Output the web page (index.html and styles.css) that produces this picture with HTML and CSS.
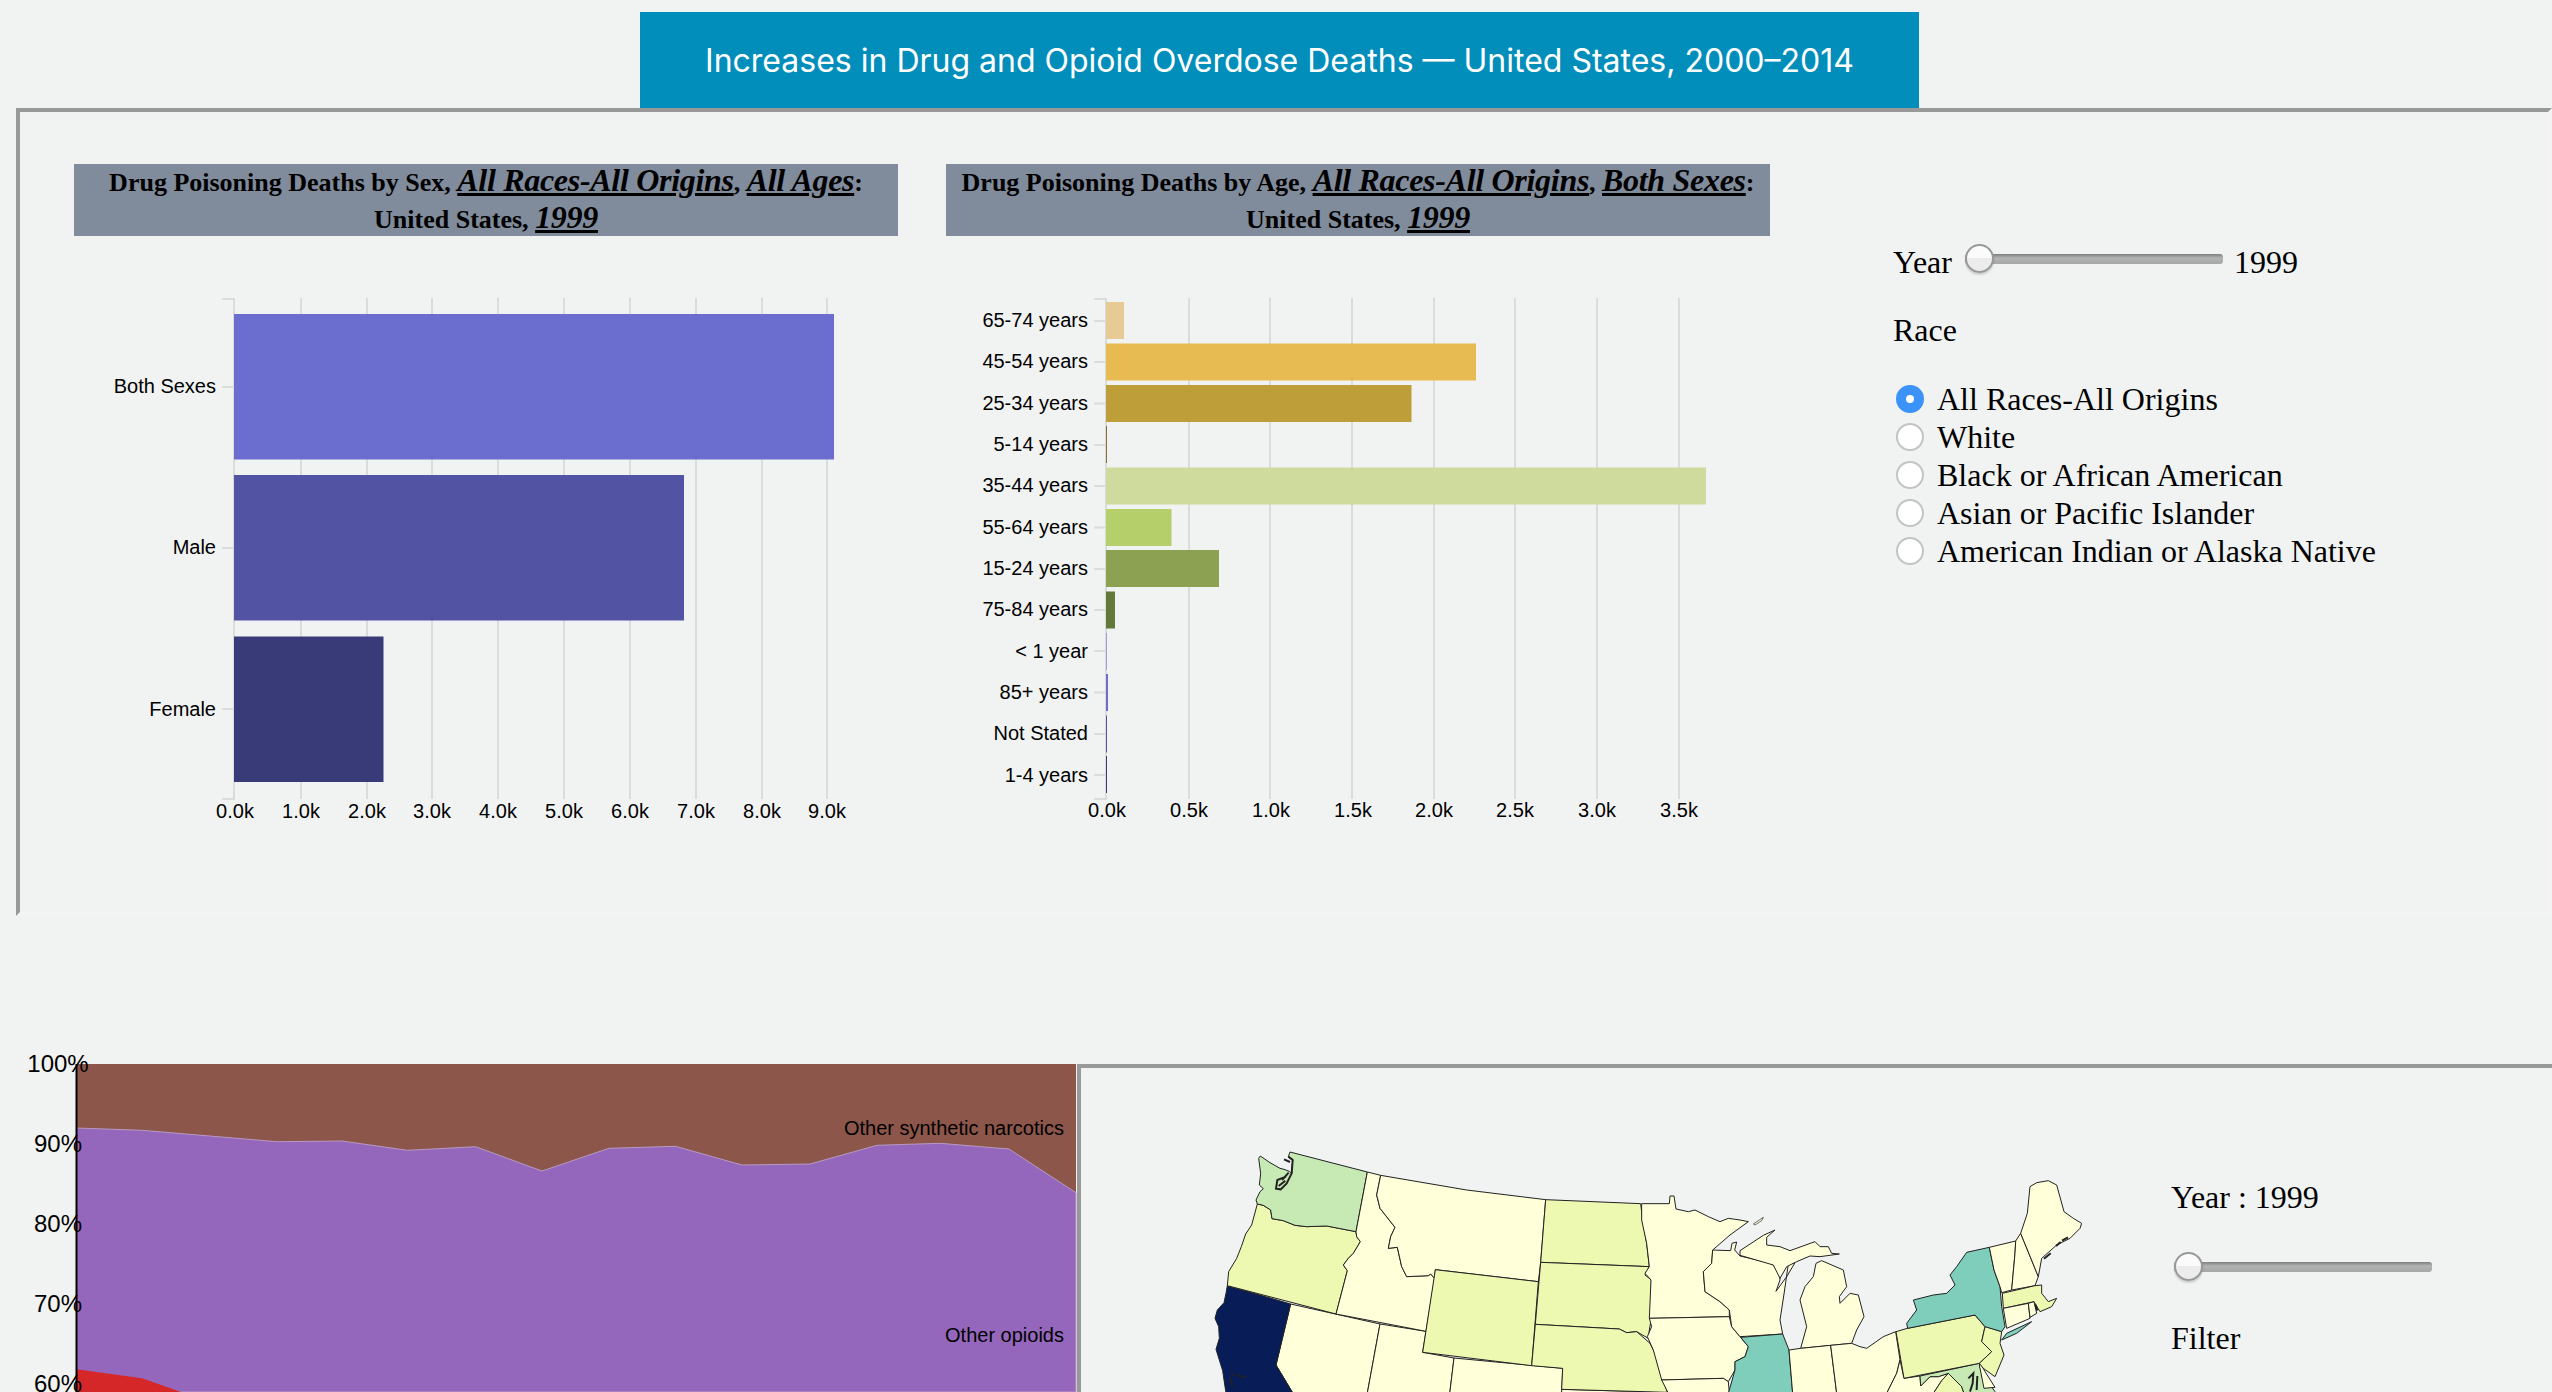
FILE: index.html
```html
<!DOCTYPE html>
<html lang="en">
<head>
    <meta charset="UTF-8">
    <title>Increases in Drug and Opioid Overdose Deaths</title>
    <link rel="stylesheet" href="styles.css">
</head>
<body>

<div class="title-bar">Increases in Drug and Opioid Overdose Deaths — United States, 2000–2014</div>

<!-- top panel: two bar charts and the controls -->
<div class="panel top-panel">
    <div class="chart-col">
        <h2 class="chart-title">Drug Poisoning Deaths by Sex, <em>All Races-All Origins</em>, <em>All Ages</em>:<br>United States, <em>1999</em></h2>
        <svg class="bar-chart" viewBox="74 236 824 614">
            <g class="grid">
                <path d="M222 299H234V799H222"/>
                <path d="M301 298V799M367 298V799M432 298V799M498 298V799M564 298V799M630 298V799M696 298V799M762 298V799M827 298V799"/>
                <path d="M222 387H234M222 548H234M222 709H234"/>
            </g>
            <rect x="234" y="314" width="600" height="145.5" fill="#6b6ecf"/>
            <rect x="234" y="475" width="450" height="145.5" fill="#5254a3"/>
            <rect x="234" y="636.5" width="149.5" height="145.5" fill="#393b79"/>
            <g class="tick-left">
                <text x="216" y="393">Both Sexes</text>
                <text x="216" y="554">Male</text>
                <text x="216" y="716">Female</text>
            </g>
            <g class="tick-bottom">
                <text x="235" y="818">0.0k</text>
                <text x="301" y="818">1.0k</text>
                <text x="367" y="818">2.0k</text>
                <text x="432" y="818">3.0k</text>
                <text x="498" y="818">4.0k</text>
                <text x="564" y="818">5.0k</text>
                <text x="630" y="818">6.0k</text>
                <text x="696" y="818">7.0k</text>
                <text x="762" y="818">8.0k</text>
                <text x="827" y="818">9.0k</text>
            </g>
        </svg>
    </div>

    <div class="chart-col">
        <h2 class="chart-title">Drug Poisoning Deaths by Age, <em>All Races-All Origins</em>, <em>Both Sexes</em>:<br>United States, <em>1999</em></h2>
        <svg class="bar-chart" viewBox="946 236 824 614">
            <g class="grid">
                <path d="M1094 299H1106V799H1094"/>
                <path d="M1189 298V799M1270 298V799M1352 298V799M1434 298V799M1515 298V799M1597 298V799M1679 298V799"/>
                <path d="M1094 321H1106M1094 362H1106M1094 403.500H1106M1094 445H1106M1094 486H1106M1094 527.500H1106M1094 569H1106M1094 610H1106M1094 651H1106M1094 692.500H1106M1094 734H1106M1094 775H1106"/>
            </g>
            <rect x="1106" y="302" width="18" height="37" fill="#e7cb94"/>
            <rect x="1106" y="343.500" width="370" height="37" fill="#e7ba52"/>
            <rect x="1106" y="385" width="305.500" height="37" fill="#bd9e39"/>
            <rect x="1106" y="426" width="1" height="37" fill="#8c6d31"/>
            <rect x="1106" y="467.500" width="600" height="37" fill="#cedb9c"/>
            <rect x="1106" y="509" width="65.500" height="37" fill="#b5cf6b"/>
            <rect x="1106" y="550" width="113" height="37" fill="#8ca252"/>
            <rect x="1106" y="591.500" width="9" height="37" fill="#637939"/>
            <rect x="1106" y="633" width="1" height="37" fill="#9c9ede"/>
            <rect x="1106" y="674" width="2" height="37" fill="#6b6ecf"/>
            <rect x="1106" y="715.500" width="1" height="37" fill="#5254a3"/>
            <rect x="1106" y="756" width="1" height="37" fill="#393b79"/>
            <g class="tick-left">
                <text x="1088" y="327">65-74 years</text>
                <text x="1088" y="368">45-54 years</text>
                <text x="1088" y="410">25-34 years</text>
                <text x="1088" y="451">5-14 years</text>
                <text x="1088" y="492">35-44 years</text>
                <text x="1088" y="534">55-64 years</text>
                <text x="1088" y="575">15-24 years</text>
                <text x="1088" y="616">75-84 years</text>
                <text x="1088" y="658">&lt; 1 year</text>
                <text x="1088" y="699">85+ years</text>
                <text x="1088" y="740">Not Stated</text>
                <text x="1088" y="782">1-4 years</text>
            </g>
            <g class="tick-bottom">
                <text x="1107" y="817">0.0k</text>
                <text x="1189" y="817">0.5k</text>
                <text x="1271" y="817">1.0k</text>
                <text x="1353" y="817">1.5k</text>
                <text x="1434" y="817">2.0k</text>
                <text x="1515" y="817">2.5k</text>
                <text x="1597" y="817">3.0k</text>
                <text x="1679" y="817">3.5k</text>
            </g>
        </svg>
    </div>

    <div class="controls">
        <div class="year-row">
            <label for="yearTop">Year</label>
            <input class="slider year-slider" id="yearTop" type="range" min="1999" max="2014" value="1999">
            <span>1999</span>
        </div>
        <div class="race-label">Race</div>
        <div class="race-list">
            <label class="race-item"><input type="radio" name="race" checked>All Races-All Origins</label>
            <label class="race-item"><input type="radio" name="race">White</label>
            <label class="race-item"><input type="radio" name="race">Black or African American</label>
            <label class="race-item"><input type="radio" name="race">Asian or Pacific Islander</label>
            <label class="race-item"><input type="radio" name="race">American Indian or Alaska Native</label>
        </div>
    </div>
</div>

<div class="bottom-row">
    <!-- stacked area chart, cut by the window -->
    <svg class="area-chart" viewBox="0 1040 1077 352">
        <rect x="76" y="1064" width="1000" height="328" fill="#8c564b"/>
        <path d="M76.500 1128L142 1130.300L277 1141.700L342 1141L407.600 1150.300L475.600 1146.700L542 1171L609 1148.300L675.600 1146.300L742 1165L810 1164L877 1145.300L940 1143.300L1009 1149L1076 1192.700V1392H76.500Z" fill="#9467bd" stroke="#b89ac0" stroke-width="1"/>
        <path d="M76.500 1369.300L142 1378.300L181 1392V1400H76.500Z" fill="#d62728"/>
        <path class="axis-line" d="M76.500 1064V1392"/>
        <g class="percent-labels">
            <text x="58" y="1072">100%</text>
            <text x="58" y="1152">90%</text>
            <text x="58" y="1232">80%</text>
            <text x="58" y="1312">70%</text>
            <text x="58" y="1392">60%</text>
        </g>
        <text class="area-label" x="1064" y="1135">Other synthetic narcotics</text>
        <text class="area-label" x="1064" y="1342">Other opioids</text>
    </svg>

    <div class="panel map-panel">
        <!-- viewBox is in thirds of a pixel -->
        <svg class="us-map" viewBox="-297 -186 3180 972">
            <g class="state">
                <path class="c0" d="M332 522L600 582L560 800H345L288 705Z"/>
                <path class="c0" d="M600 582L738 604L728 667L822 684L808 800H560Z"/>
                <path class="c0" d="M822 684L1148 715L1145 800H808Z"/>
                <path class="c0" d="M1145 778L1462 787V800H1145Z"/>
                <path class="c3" d="M142 467L332 522L288 705L345 800H140L135 770L128 722L118 690L108 658L118 625L116 590L105 565L112 540L132 518L138 490Z"/>
                <path class="c1" d="M232 222L250 226L272 240L276 266L310 272L345 286L380 290L440 288L528 305L530 320L541 335L520 370L505 385L490 405L502 422L468 552L142 467L146 425L158 405L170 385L184 350L197 312L215 285Z"/>
                <path class="c2" d="M330 66L562 126L528 305L440 288L380 290L345 286L310 272L276 266L272 240L250 226L232 222L228 210L240 185L250 176L238 165L242 130L236 85L241 78L270 98L300 115L312 118L328 124L335 130L338 90L325 80Z"/>
                <path class="c0" d="M562 126L602 136L590 195L600 235L645 292L632 320L625 355L652 352L665 410L680 440L745 437L752 432L764 445L738 604L468 552L502 422L490 405L505 385L520 370L541 335L530 320L528 305Z"/>
                <path class="c0" d="M602 136L860 180L1097 209L1082 397L1075 455L766 419L764 445L752 432L745 437L680 440L665 410L652 352L625 355L632 320L645 292L600 235L590 195Z"/>
                <path class="c1" d="M766 419L1075 455L1055 707L728 667Z"/>
                <path class="c1" d="M1097 209L1382 221L1388 270L1400 340L1408 410L1082 397Z"/>
                <path class="c1" d="M1082 397L1408 410L1395 435L1414 450L1414 565L1408 600L1405 625L1370 605L1340 608L1318 597L1066 583Z"/>
                <path class="c1" d="M1066 583L1318 597L1340 608L1370 605L1410 640L1425 670L1440 720L1462 787L1145 778L1148 715L1055 707Z"/>
            </g>
            <path class="puget" d="M325 80L338 90L335 130L320 160L302 178L288 176L292 150L318 140M312 88L330 96M306 150L326 128M296 168L316 152"/>
            <path class="puget" d="M155 735L162 732M172 736L198 742M150 745L158 770"/>

            <g class="state" transform="translate(1380 0)">
                <path class="c0" d="M5 221H88L90 198H102L108 237L145 245L165 240L205 260L240 275L265 265L300 270L325 275L270 315L218 360L215 400L190 425L195 485L240 515L268 540V560L28 565L33 450L15 430L28 410L20 340L5 270Z"/>
                <path class="c0" d="M28 565L268 560L275 590L300 620L325 650L315 680L285 695L285 720L265 755L250 745L65 750L40 660L22 620L35 590Z"/>
                <path class="c0" d="M65 750L250 745L265 755L268 790H85Z"/>
                <path class="c0" d="M218 360L272 362L276 340L290 336L284 360L300 378L395 400L418 428L420 450L408 484L440 440L465 398L445 402L432 492L420 570L428 612L300 620L275 590L268 540L240 515L195 485L190 425L215 400Z"/>
                <path class="c0" d="M300 362L370 316L405 300L380 322L380 345L420 350L450 362L525 335L540 350L565 350L575 370L598 372L540 380L510 378L470 395L440 410L420 445L400 405L300 376Z"/>
                <path class="c0" d="M545 392L610 420L620 470L598 500L600 520L630 490L655 495L672 560L650 600L635 640L482 655L500 590L480 510L495 470L520 440L528 400Z"/>
                <path class="c4" d="M302 622L428 612L447 660L458 790H265L285 720L285 695L315 680L325 650Z"/>
                <path class="c0" d="M447 660L482 655L572 646L590 790H458Z"/>
                <path class="c0" d="M572 646L635 640L660 650L680 655L730 620L767 605L780 690L770 730L740 790H590Z"/>
                <path class="c0" d="M780 690L792 745L840 738L842 768L870 740L895 740L925 730L905 752L880 790H740L770 730Z"/>
                <path class="c1" d="M925 730L965 770L972 790H880L905 752Z"/>
                <path class="c2" d="M840 738L1018 700L1025 730L1065 785V790H972L965 770L925 730L895 740L870 740L842 768Z"/>
                <path class="c0" d="M1020 698L1035 725L1065 772L1032 775L1018 705Z"/>
                <path class="c1" d="M802 595L1005 555L1035 590L1025 635L1055 665L1018 700L792 745L768 605Z"/>
                <path class="c1" d="M1038 590L1085 605L1080 640L1092 675L1065 740L1030 715L1018 700L1055 665L1025 635L1035 590Z"/>
                <path class="c4" d="M980 367L1048 352L1062 420L1080 470L1085 530L1095 590L1085 605L1035 590L1005 555L803 595L800 580L830 540L820 510L880 495L920 490L945 465L930 435L950 410Z"/>
                <path class="c4" d="M1085 630L1100 610L1175 575L1130 610Z"/>
                <path class="c0" d="M1048 352L1127 333L1125 370L1115 480L1085 488L1080 470L1062 420Z"/>
                <path class="c0" d="M1127 333L1142 310L1195 440L1185 467L1115 480L1125 370Z"/>
                <path class="c0" d="M1142 310L1162 250L1170 170L1190 158L1225 152L1250 165L1272 245L1300 265L1325 280L1320 295L1290 325L1250 345L1205 385L1195 440Z"/>
                <path class="c1" d="M1087 490L1185 467L1205 465L1205 490L1225 515L1250 505L1235 530L1200 545L1182 515L1090 535Z"/>
                <path class="c0" d="M1090 535L1165 520L1170 565L1100 595Z"/>
                <path class="c0" d="M1165 520L1182 515L1190 550L1170 562Z"/>
            </g>
            <g transform="translate(1380 0)">
                <path class="puget" d="M1212 386L1232 370M1248 348L1262 336M1266 332L1284 322M1186 524L1192 542"/>
                <path class="puget" d="M985 745L1000 730L998 760L990 785M1012 738L1010 780"/>
                <path class="lake-isle" d="M340 282L370 262L365 272L345 285Z"/>
            </g>
        </svg>
        <div class="map-controls">
            <div class="map-year">Year : 1999</div>
            <input class="slider map-slider" type="range" min="1999" max="2014" value="1999">
            <div class="map-filter">Filter</div>
        </div>
    </div>
</div>

</body>
</html>
```

FILE: styles.css
```css
html, body {
    height: 1392px;
    overflow: hidden;
}
body {
    margin: 0;
    padding-top: 12px;
    box-sizing: border-box;
    background-color: #f1f3f3;
    font-family: "Liberation Serif", serif;
    font-size: 32px;
    color: #000;
}

.title-bar {
    display: flex;
    justify-content: center;
    align-items: center;
    width: 1279px;
    height: 96px;
    margin-left: 640px;
    background-color: #028ebb;
    color: white;
    font-family: Inter, sans-serif;
    font-size: 32px;
}

/* inset look: dark top and left, pale bottom and right */
.panel {
    display: flex;
    box-sizing: border-box;
    border-style: solid;
    border-width: 4px;
    border-color: #999 #f3f4f3 #f3f4f3 #999;
}
.top-panel {
    height: 808px;
    margin-left: 16px;
    padding: 52px 0 0 54px;
    gap: 48px;
}

.chart-col {
    width: 824px;
    flex-shrink: 0;
}
.chart-title {
    height: 72px;
    margin: 0;
    background-color: #808b9b;
    font-size: 26px;
    font-weight: bold;
    line-height: 36px;
    text-align: center;
}
.chart-title em {
    font-size: 32px;
    line-height: 1;
    letter-spacing: -0.3px;
    text-decoration: underline;
}
.bar-chart {
    display: block;
    width: 824px;
    height: 614px;
}

.grid path {
    fill: none;
    stroke: #dadcdc;
    stroke-width: 2;
}
.tick-left text,
.tick-bottom text,
.area-label {
    font-family: "Liberation Sans", sans-serif;
    font-size: 20px;
}
.tick-left text {
    text-anchor: end;
}
.tick-bottom text {
    text-anchor: middle;
}

.controls {
    margin: 80px 0 0 75px;
    flex-shrink: 0;
}
.year-row {
    display: flex;
    line-height: 37px;
}
.slider {
    -webkit-appearance: none;
    appearance: none;
    display: block;
    width: 258px;
    height: 29px;
    background: transparent;
}
.slider::-webkit-slider-runnable-track {
    height: 10px;
    border-radius: 3px;
    background: linear-gradient(#7d7f7f, #b2b3b3 40%, #a6a7a7);
}
.slider::-webkit-slider-thumb {
    -webkit-appearance: none;
    appearance: none;
    box-sizing: border-box;
    width: 29px;
    height: 29px;
    margin-top: -10px;
    border: 2px solid #999;
    border-radius: 50%;
    background: linear-gradient(#fbfbfb 50%, #ececec 50%);
    box-shadow: 0 2px 2px rgba(0, 0, 0, 0.15);
}
.year-slider {
    margin: 0 11px 0 13px;
}
.race-label {
    margin-top: 31px;
    line-height: 37px;
}
.race-list {
    margin-top: 31px;
}
.race-item {
    display: flex;
    align-items: center;
    height: 38px;
}
.race-item input {
    -webkit-appearance: none;
    appearance: none;
    box-sizing: border-box;
    width: 28px;
    height: 28px;
    margin: 0 13px 0 3px;
    border: 2px solid #c2c3c3;
    border-radius: 50%;
    background: #fff;
}
.race-item input:checked {
    border: 10px solid #3b93f7;
}

.bottom-row {
    display: flex;
    margin-top: 124px;
}
.area-chart {
    display: block;
    width: 1077px;
    height: 352px;
    flex-shrink: 0;
    font-family: "Liberation Sans", sans-serif;
}
.axis-line {
    fill: none;
    stroke: #000;
    stroke-width: 2;
}
.percent-labels text {
    font-size: 24px;
    text-anchor: middle;
}
.area-label {
    text-anchor: end;
}

.map-panel {
    flex: 1;
    height: 328px;
    margin-top: 24px;
    border-right: 0;
    border-bottom: 0;
}
.us-map {
    display: block;
    width: 1060px;
    height: 324px;
    flex-shrink: 0;
}
.state path {
    stroke: #222;
    stroke-width: 3;
    stroke-linejoin: round;
}
.c0 { fill: #ffffd9; }
.c1 { fill: #edf8b1; }
.c2 { fill: #c7e9b4; }
.c3 { fill: #081d58; }
.c4 { fill: #7fcdbb; }
.puget {
    fill: none;
    stroke: #222;
    stroke-width: 6;
}
.lake-isle {
    fill: #ffffd9;
    stroke: #222;
    stroke-width: 2;
}

.map-controls {
    margin: 111px 0 0 30px;
}
.map-year, .map-filter {
    line-height: 37px;
}
.map-slider {
    margin: 36px 0 39px 3px;
}
```
